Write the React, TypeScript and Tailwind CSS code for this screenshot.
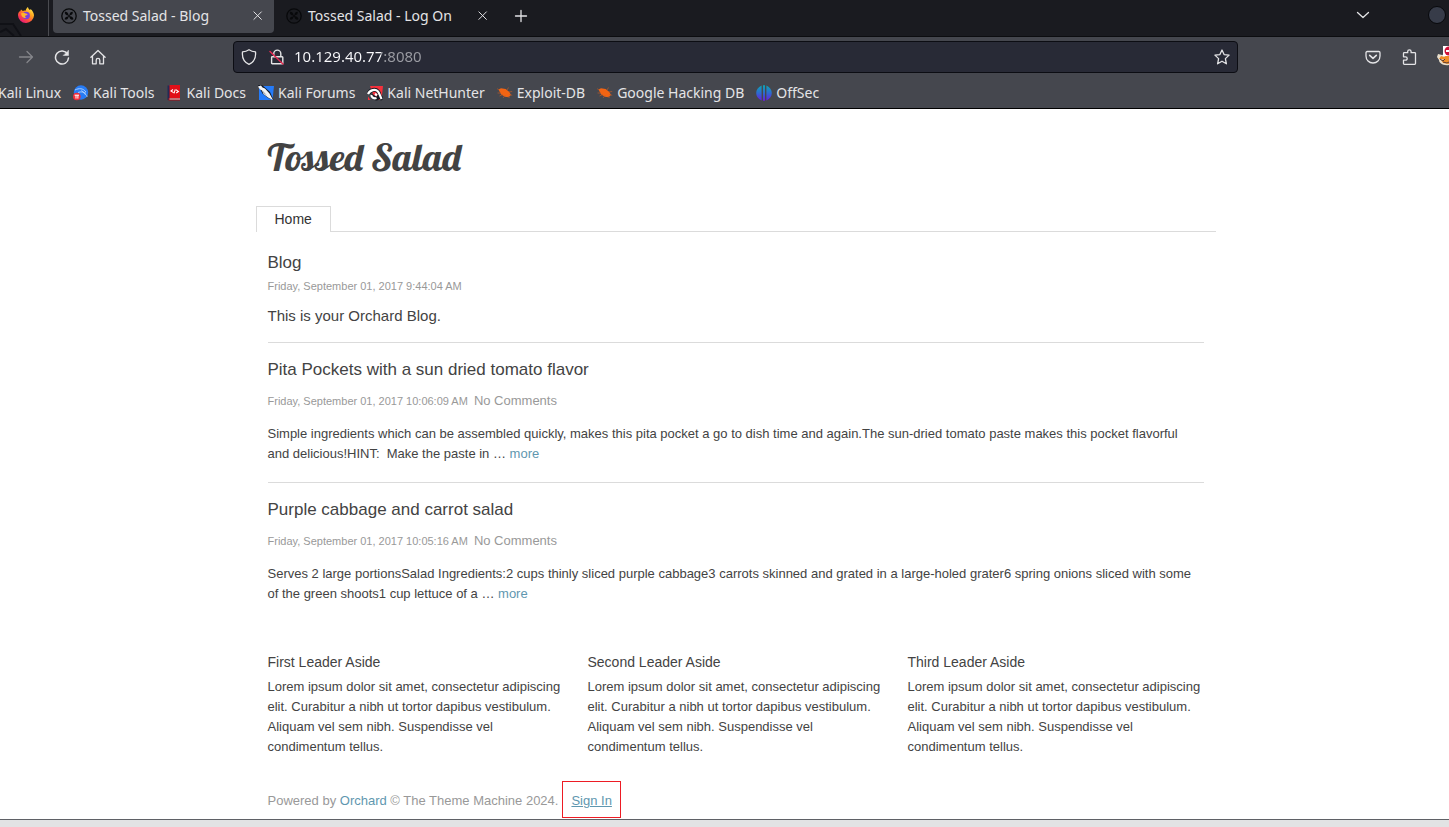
import type { ReactNode } from "react";

const stroke = {
  fill: "none",
  stroke: "currentColor",
  strokeWidth: 1.3,
  strokeLinecap: "round" as const,
  strokeLinejoin: "round" as const,
};

function Icon({ children, className = "size-4" }: { children: ReactNode; className?: string }) {
  return (
    <svg viewBox="0 0 16 16" className={`${className} shrink-0`} aria-hidden="true" {...stroke}>
      {children}
    </svg>
  );
}

function FirefoxLogo() {
  return (
    <svg viewBox="0 0 16 16" className="size-4 shrink-0" aria-hidden="true">
      <defs>
        <linearGradient id="fox" x1="0.85" y1="0.05" x2="0.2" y2="0.95">
          <stop offset="0" stopColor="#fff14f" />
          <stop offset="0.35" stopColor="#ffa31f" />
          <stop offset="0.7" stopColor="#ff4a3f" />
          <stop offset="1" stopColor="#e5177d" />
        </linearGradient>
      </defs>
      <path
        fill="url(#fox)"
        d="M3 2.5 4.8 4c.8-.5 2-.7 2.8-.3C7.8 2.3 8.7.9 10 0c.1 1.500 1 2.200 2 3.100.4-.4.500-.7.5-1.100C14.500 3.500 16 6 16 8.500A7.900 7.900 0 0 1 8 16a7.900 7.900 0 0 1-8-7.700c0-1.800.6-3.200 1.600-4.300L1.900 5z"
      />
      <circle cx="8.2" cy="8.5" r="3.7" fill="#7a3fe0" />
      <path fill="#ffb52b" d="M3.200 6.200c1.300-.8 3.300-.7 4.600.4 1 .2 1.600.3 1.700.9-.2.8-2 .6-2.400 1.700-.2.8.6 1.400 1.500 1.700-2.800.7-5.600-1.600-5.400-4.700z" />
    </svg>
  );
}

function OrchardLogo() {
  return (
    <svg viewBox="0 0 16 16" className="size-4 shrink-0 text-[#08090b]" aria-hidden="true">
      <circle cx="8" cy="8" r="7.2" fill="none" stroke="currentColor" strokeWidth="1.3" />
      <g fill="currentColor">
        <path d="M7.600 7.400C7.500 5.200 5.800 3.500 3.800 3.900c-.2 2.100 1.500 3.700 3.800 3.500z" />
        <path d="M8.500 7.400c-.3-2 1-3.700 3.200-3.700.6 1.800-.8 3.700-3.200 3.700z" />
        <path d="M7.500 8.400c-2-.2-4 .8-3.800 3 2 .7 3.900-.7 3.800-3z" />
        <path d="M8.400 8.300c2.200-.3 4.300 1.100 3.900 3.300-2.200.7-4-.9-3.900-3.300z" />
        <circle cx="8" cy="8" r="1" />
      </g>
    </svg>
  );
}

function ToolsLogo() {
  return (
    <svg viewBox="0 0 16 16" className="size-4 shrink-0" aria-hidden="true">
      <circle cx="8" cy="7.500" r="7.200" fill="#267bf5" />
      <path d="M2 5c4-2 8-2 11 2M5 7.500c3-1.200 6-.5 8 .8M8.500 5.500c1.500.5 1.500 2.500 3.500 3.500s2 2 2 3" fill="none" stroke="#b9d7ff" strokeWidth=".9" />
      <circle cx="3.800" cy="11.500" r="3.800" fill="#f12c3a" />
      <path d="M1.600 10.200h4.400M3 10.200v3.400M4.900 10.200v3.400" stroke="#fff" strokeWidth="1" />
    </svg>
  );
}

function DocsLogo() {
  return (
    <svg viewBox="0 0 16 16" className="size-4 shrink-0" aria-hidden="true">
      <path fill="#252a55" d="M.5.5H3v14.500H.5z" />
      <path fill="#e10f18" d="M2.500 0H13v13H2.500z" />
      <path fill="#a30c17" d="M1.500 13H13v2.500H1.500z" />
      <path fill="#ddd" d="M2.500 13.500H13v1H2.500z" />
      <path d="M6 4.500 4 6l2.500 1.600M8.300 4.300 7 8.300M9 4.800l2.400 1.600-2.200 1.600" fill="none" stroke="#fff" strokeWidth="1.100" />
    </svg>
  );
}

function ForumsLogo() {
  return (
    <svg viewBox="0 0 16 16" className="size-4 shrink-0" aria-hidden="true">
      <path fill="#247bfa" d="M1 1h15l-1.500 14H1z" />
      <path fill="#111722" d="M0 0h4l8 7 3.500 8-5.500-2-5.500-4.500z" />
      <path fill="#f3f5f7" d="m0 1.500 3-1 1.500 2 2.500 1 4.500 5 3.500 6.500-5-2.500-4.500-3.500-1.500-3.500-2-1z" />
      <path fill="#8d949d" d="m4.500 5.500 5 5.500-4-3z" />
    </svg>
  );
}

function NetHunterLogo() {
  return (
    <svg viewBox="0 0 16 16" className="size-4 shrink-0" aria-hidden="true">
      <path fill="#f5313c" d="M3 1h13l-1.500 14H8z" />
      <path
        d="M1.500 8.500C3.500 4.500 8.500 3.800 11 6.500c2.300 2.500 1.500 6-1 6.800-2.400.7-4.200-1.300-3.200-3.300M12 10.500l3.500 4"
        fill="none"
        stroke="#151820"
        strokeWidth="4"
      />
      <path
        d="M1 9C3 4.800 8.500 3.800 11 6.500c1.300 1.500 1.600 3.500 3.600 7.500M4.500 10c-.3 2.500 2.500 4 5 3M8 9l2 1.200"
        fill="none"
        stroke="#fff"
        strokeWidth="2.200"
      />
      <path fill="#f5313c" d="M1 11.500 3.500 15H1z" />
    </svg>
  );
}

function ExploitLogo() {
  return (
    <svg viewBox="0 0 16 16" className="size-4 shrink-0" aria-hidden="true">
      <path fill="#f26413" d="M1.500 4.500 4 3.300l4.600.8 3.800 2.800 1.600 3.200-2.400 2.200-3.800-.6-3.600-2.200L2.800 7z" />
      <path d="m1.500 5-1-1.500M4 8H.5M5.500 9.500l-3 1.500M8 10.500 6 13M10 5l1.500-2.500M12 7l3.200-.5M12.500 9.500l2.700.8M11 11l1.500 2" stroke="#b95a28" strokeWidth=".7" />
    </svg>
  );
}

function OffSecLogo() {
  return (
    <svg viewBox="0 0 16 16" className="size-4 shrink-0" aria-hidden="true">
      <defs>
        <linearGradient id="offsec" x1="0" y1="0" x2="0" y2="1">
          <stop offset="0" stopColor="#0ca6b4" />
          <stop offset=".5" stopColor="#2d6ad0" />
          <stop offset="1" stopColor="#691be0" />
        </linearGradient>
      </defs>
      <path fill="url(#offsec)" d="M5.600.5v15C-1.600 12.500-1.600 3.500 5.600.5zM7 .3h2v15.400H7zM10.400.5c7.200 3 7.200 12 0 15z" />
    </svg>
  );
}

const bookmarks: { name: string; logo?: ReactNode }[] = [
  { name: "Kali Linux" },
  { name: "Kali Tools", logo: <ToolsLogo /> },
  { name: "Kali Docs", logo: <DocsLogo /> },
  { name: "Kali Forums", logo: <ForumsLogo /> },
  { name: "Kali NetHunter", logo: <NetHunterLogo /> },
  { name: "Exploit-DB", logo: <ExploitLogo /> },
  { name: "Google Hacking DB", logo: <ExploitLogo /> },
  { name: "OffSec", logo: <OffSecLogo /> },
];

function Tab({ title, active = false }: { title: string; active?: boolean }) {
  return (
    <div className={`flex h-[33px] w-[221px] items-center gap-1.5 rounded-b pr-2.5 pb-0.5 pl-2 ${active ? "bg-[#45474e]" : ""}`}>
      <OrchardLogo />
      <button className="flex-1 text-left">{title}</button>
      <button aria-label={`Close ${title}`}>
        <Icon className="size-3">
          <path d="m2.500 2.500 10 10m0-10-10 10" />
        </Icon>
      </button>
    </div>
  );
}

function Browser() {
  return (
    <header className="bg-[#45474e] font-['Noto_Sans',sans-serif] text-sm text-[#e4e4e6]">
      <div className="flex h-[37px] items-start overflow-hidden border-b border-[#0c0d10] bg-[#1a1b20]">
        <div className="relative flex h-9 w-[49px] shrink-0 items-center border-r border-[#4a4b50] pb-1.5 pl-[18px]">
          <svg viewBox="0 0 48 36" className="absolute inset-0 h-9 w-12" fill="none" stroke="#101116" aria-hidden="true">
            <path d="M0 24h13l8 12M0 32l6-3 8 7" strokeWidth="2" />
          </svg>
          <span className="relative">
            <FirefoxLogo />
          </span>
        </div>
        <div className="flex gap-1 pl-1">
          <Tab title="Tossed Salad - Blog" active />
          <Tab title="Tossed Salad - Log On" />
        </div>
        <button aria-label="New tab" className="ml-1 flex h-8 w-9 items-center justify-center">
          <Icon>
            <path d="M8 2.500v11M2.500 8h11" />
          </Icon>
        </button>
        <button aria-label="List all tabs" className="mr-[57px] ml-auto flex h-[30px] items-center">
          <Icon>
            <path d="m2.500 5.500 5.500 5 5.500-5" />
          </Icon>
        </button>
        <button aria-label="Minimize" className="mt-1.5 mr-[3px] size-[18px] rounded-full border border-[#08090c] bg-[#373c49]" />
      </div>

      <div className="flex h-10 items-center">
        <div className="flex w-[233px] items-center gap-5 pl-[18px]">
          <button aria-label="Forward" className="text-[#85868b]">
            <Icon>
              <path d="M1.500 8h13M9 2.500 14.500 8 9 13.500" />
            </Icon>
          </button>
          <button aria-label="Reload">
            <Icon>
              <path d="M13.500 5A6.500 6.500 0 1 0 14.500 9" strokeWidth="1.500" />
              <path d="M14.500 1.500v5h-5z" fill="currentColor" strokeWidth=".5" />
            </Icon>
          </button>
          <button aria-label="Home">
            <Icon>
              <path d="m.9 8.200 7.100-6.700 7.100 6.700M2.500 7v7.800h3.700v-3.600a1.800 1.800 0 0 1 3.600 0v3.600h3.700V7" />
            </Icon>
          </button>
        </div>
        <div className="mr-[211px] flex h-8 flex-1 items-center gap-3 rounded border border-[#0c0d13] bg-[#282a36] px-[7px]">
          <Icon>
            <path d="M8 .7c2.200 1.500 4.100 2 6.500 2.200C15.200 9.500 12.500 13.300 8 15.300 3.500 13.300.8 9.500 1.500 2.900 3.900 2.700 5.800 2.200 8 .7z" />
          </Icon>
          <Icon>
            <path d="M4.800 7.800V4.600a3.500 3.500 0 0 1 7 0v3.200M3.200 7.800h10a.6.6 0 0 1 .6.6v5.800a.6.6 0 0 1-.6.6h-10a.6.6 0 0 1-.6-.6V8.400a.6.6 0 0 1 .6-.6z" strokeWidth="1.400" />
            <path d="m1 2.500 13 12.500" stroke="#e22850" strokeWidth="1.500" />
          </Icon>
          <input
            aria-label="Address"
            defaultValue="10.129.40.77:8080"
            className="-ml-[3px] min-w-0 flex-1 bg-linear-to-r from-[#fbfbfe] from-[87px] to-[#9b9ca3] to-[87px] bg-clip-text text-[15px] text-transparent outline-none"
          />
          <button aria-label="Bookmark this page">
            <Icon>
              <path d="m8 1 2.100 4.600 5 .5-3.700 3.500 1 5.200L8 12.200l-4.400 2.600 1-5.200L.9 6.100l5-.5z" />
            </Icon>
          </button>
        </div>
      </div>

      <nav aria-label="Bookmarks" className="flex h-8 items-center gap-3 overflow-hidden border-b border-black">
        {bookmarks.map(({ name, logo }) => (
          <a key={name} href="#" className="flex shrink-0 items-center gap-1">
            {logo}
            <span className={logo ? "" : "-ml-0.5"}>{name}</span>
          </a>
        ))}
      </nav>
    </header>
  );
}

function ToolbarExtras() {
  return (
    <div className="absolute top-[42px] right-0 flex h-[30px] items-center text-[#e4e4e6]">
      <button aria-label="Save to Pocket" className="mr-5">
        <Icon>
          <path d="M2.200 2.500h11.600c.7 0 1.200.5 1.200 1.200V7c0 4-3 7-7 7s-7-3-7-7V3.700c0-.7.5-1.200 1.200-1.200z" />
          <path d="m4.700 6.300 3.300 3 3.300-3" strokeWidth="1.600" />
        </Icon>
      </button>
      <button aria-label="Extensions" className="mr-5">
        <Icon>
          <path d="M6.700 3.700V2.600a1.700 1.700 0 0 1 3.400 0v1.100h3.600a.8.8 0 0 1 .8.8v10a.8.8 0 0 1-.8.8H3.300a.8.8 0 0 1-.8-.8v-3.300h2a1.700 1.700 0 0 0 0-3.400h-2V4.500a.8.8 0 0 1 .8-.8z" />
        </Icon>
      </button>
      <button aria-label="FoxyProxy" className="-mt-1">
        <svg viewBox="0 0 12 22" className="h-[22px] w-3" aria-hidden="true">
          <path fill="#e9dfcc" d="m1 10 4 1 7-2v12C6 22 2 19 2 16L0 13z" />
          <path fill="#ef8d29" d="m4 12 3 1 5-3v5H2zm0 4 8-2v6l-6-1z" />
          <path d="m3 15 3 2 2-2M6 18l4 1 2-1" stroke="#563a31" fill="none" />
          <path fill="#fff" d="M6 2h6v10H6z" />
          <circle cx="12" cy="7" r="4.500" fill="#cf1238" />
          <path fill="#fff" d="M9 6h3v2H9z" />
        </svg>
      </button>
    </div>
  );
}

const posts = [
  {
    title: "Pita Pockets with a sun dried tomato flavor",
    date: "Friday, September 01, 2017 10:06:09 AM",
    text: "Simple ingredients which can be assembled quickly, makes this pita pocket a go to dish time and again.The sun-dried tomato paste makes this pocket flavorful and delicious!HINT:\u00a0 Make the paste in …",
  },
  {
    title: "Purple cabbage and carrot salad",
    date: "Friday, September 01, 2017 10:05:16 AM",
    text: "Serves 2 large portionsSalad Ingredients:2 cups thinly sliced purple cabbage3 carrots skinned and grated in a large-holed grater6 spring onions sliced with some of the green shoots1 cup lettuce of a …",
  },
];

const asides = ["First Leader Aside", "Second Leader Aside", "Third Leader Aside"];

export default function App() {
  return (
    <div className="relative flex min-h-screen flex-col bg-[#e2e3e4]">
      <Browser />
      <ToolbarExtras />
      <div className="border-b border-[#5f6166] bg-white pb-px pl-[22px] font-['Liberation_Sans',Arial,sans-serif] text-[13px] leading-5 text-[#434343]">
        <div className="mx-auto max-w-[960px]">
          <h1 className="flex h-[97px] items-center px-3 pb-0.5 font-['Lobster','Liberation_Serif',serif] text-[38px] font-normal">
            Tossed Salad
          </h1>
          <nav aria-label="Main" className="flex h-[26px] border-b border-[#dbdbdb]">
            <a href="#" className="flex h-[26px] items-center border border-b-0 border-[#dbdbdb] bg-white px-[18px] pb-0.5 text-sm text-[#333]">
              Home
            </a>
          </nav>

          <main className="px-3 pt-[19px]">
            <section className="border-b border-[#dbdbdb] pb-4">
              <h2 className="text-[17px] leading-6">Blog</h2>
              <p className="mt-px text-[11px] leading-5 text-[#999]">Friday, September 01, 2017 9:44:04 AM</p>
              <p className="mt-2.5 text-[15px] leading-5">This is your Orchard Blog.</p>
            </section>
            {posts.map((post) => (
              <article key={post.title} className="border-b border-[#dbdbdb] pt-[15px] pb-[18px] last:border-b-0">
                <h2 className="text-[17px] leading-6">{post.title}</h2>
                <p className="mt-[9px] flex items-baseline gap-1.5 text-[#999]">
                  <span className="text-[11px]">{post.date}</span>
                  <span>No Comments</span>
                </p>
                <p className="mt-[13px] pr-3">
                  {post.text}{" "}
                  <a href="#" className="text-[#5f97af]">more</a>
                </p>
              </article>
            ))}
          </main>

          <div className="mt-7 grid grid-cols-3">
            {asides.map((title) => (
              <aside key={title} className="px-3">
                <h3 className="text-sm leading-6">{title}</h3>
                <p className="mt-[3px]">
                  Lorem ipsum dolor sit amet, consectetur adipiscing elit. Curabitur a nibh ut tortor dapibus vestibulum. Aliquam vel sem nibh. Suspendisse vel condimentum tellus.
                </p>
              </aside>
            ))}
          </div>

          <footer className="mt-6 flex items-baseline px-3 text-[#999]">
            <span>
              Powered by <a href="#" className="text-[#5f97af]">Orchard</a> © The Theme Machine 2024.
            </span>
            <span className="ml-1 border border-[#ed1c24] px-2 pt-[9px] pb-1.5">
              <a href="#" className="text-[#5f97af] underline">Sign In</a>
            </span>
          </footer>
        </div>
      </div>
    </div>
  );
}
